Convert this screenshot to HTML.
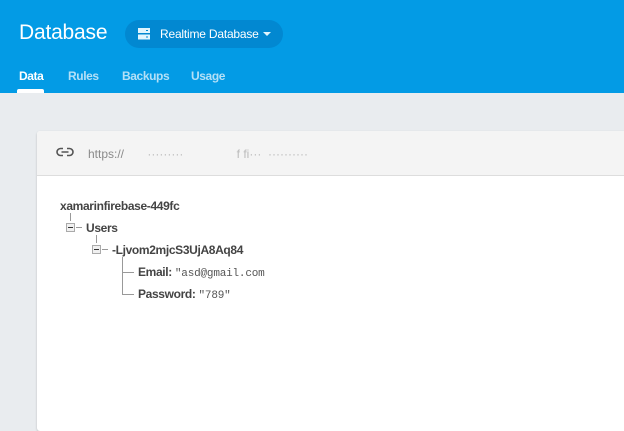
<!DOCTYPE html>
<html><head><meta charset="utf-8"><style>
*{margin:0;padding:0;box-sizing:border-box}
body{width:624px;height:425px;overflow:hidden;background:#e9ecef;font-family:"Liberation Sans",sans-serif;position:relative}
.hdr{position:absolute;left:0;top:0;width:624px;height:93px;background:#039be5}
.title{position:absolute;left:19px;top:21px;color:#fff;font-size:21px;letter-spacing:-0.2px}
.pill{position:absolute;left:125px;top:20px;width:158px;height:28px;border-radius:14px;background:#0288d1;color:#fff;font-size:12px}
.pill span{position:absolute;left:35px;top:7px;letter-spacing:-0.2px}
.tabs{position:absolute;top:69px;font-size:12px;font-weight:bold;color:#b3e0f7;letter-spacing:-0.4px}
.tab-ind{position:absolute;left:17px;top:89px;width:27px;height:4px;background:#fff;border-radius:2px 2px 0 0}
.card{position:absolute;left:37px;top:131px;width:600px;height:300px;background:#fff;border-radius:3px;box-shadow:0 1px 2px rgba(0,0,0,.2)}
.chead{position:absolute;left:0;top:0;right:0;height:45px;background:#f4f4f4;border-bottom:1px solid #ddd;border-radius:3px 0 0 0}
.url{position:absolute;left:51px;top:16px;color:#8a8a8a;font-size:12px}
.t{position:absolute;font-size:12px;font-weight:bold;color:#444;letter-spacing:-0.35px;white-space:nowrap}
.v{font-family:"Liberation Mono",monospace;font-weight:normal;color:#555;font-size:11px;letter-spacing:-0.2px}
.box{position:absolute;width:9px;height:9px;border:1px solid #aaa;background:#f0f0f0}
.box:after{content:"";position:absolute;left:1px;top:3px;width:5px;height:1px;background:#333}
.ln{position:absolute;background:#999}
</style></head><body>
<div class="hdr">
<div class="title">Database</div>
<div class="pill">
<svg style="position:absolute;left:12px;top:7px" width="14" height="14" viewBox="0 0 14 14"><rect x="1" y="1" width="12" height="5" fill="#e1f5fe"/><rect x="1" y="7.5" width="12" height="5" fill="#e1f5fe"/><rect x="9" y="3" width="2" height="1" fill="#0288d1"/><rect x="9" y="9.5" width="2" height="1" fill="#0288d1"/></svg>
<span>Realtime Database</span>
<svg style="position:absolute;left:138px;top:12px" width="8" height="5"><path d="M0 0L8 0L4 4Z" fill="#e1f5fe"/></svg>
</div>
<div class="tabs" style="left:19px;color:#fff">Data</div>
<div class="tabs" style="left:68px">Rules</div>
<div class="tabs" style="left:122px">Backups</div>
<div class="tabs" style="left:191px">Usage</div>
<div class="tab-ind"></div>
</div>
<div class="card">
<div class="chead">
<svg style="position:absolute;left:19px;top:16px" width="18" height="10" viewBox="0 0 18 10"><path d="M7 1.5H4.5a3.5 3.5 0 0 0 0 7H7M11 1.5h2.5a3.5 3.5 0 0 1 0 7H11M5.5 5h7" fill="none" stroke="#555" stroke-width="1.6"/></svg>
<div class="url">https://&nbsp;&nbsp;&nbsp;&nbsp;&nbsp;&nbsp;&nbsp;<span style="color:#bbb">·········&nbsp;&nbsp;&nbsp;&nbsp;&nbsp;&nbsp;&nbsp;&nbsp;&nbsp;&nbsp;&nbsp;&nbsp;&nbsp;&nbsp;&nbsp;&nbsp;f&nbsp;fi···&nbsp;&nbsp;··········</span></div>
</div>
<div class="t" style="left:23px;top:68px">xamarinfirebase-449fc</div>
<div class="ln" style="left:33px;top:82px;width:1px;height:8px"></div>
<div class="box" style="left:29px;top:92px"></div>
<div class="ln" style="left:39px;top:96px;width:6px;height:1px"></div>
<div class="t" style="left:49px;top:90px">Users</div>
<div class="ln" style="left:59px;top:104px;width:1px;height:8px"></div>
<div class="box" style="left:55px;top:114px"></div>
<div class="ln" style="left:65px;top:118px;width:6px;height:1px"></div>
<div class="t" style="left:75px;top:112px">-Ljvom2mjcS3UjA8Aq84</div>
<div class="ln" style="left:85px;top:126px;width:1px;height:38px"></div>
<div class="ln" style="left:85px;top:141px;width:12px;height:1px"></div>
<div class="ln" style="left:85px;top:163px;width:12px;height:1px"></div>
<div class="t" style="left:101px;top:134px">Email: <span class="v">"asd@gmail.com</span></div>
<div class="t" style="left:101px;top:156px">Password: <span class="v">"789"</span></div>
</div>
</body></html>
